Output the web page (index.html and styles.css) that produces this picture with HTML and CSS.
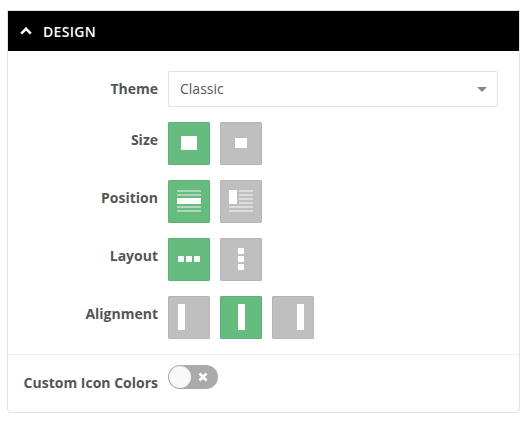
FILE: index.html
```html
<!DOCTYPE html>
<html lang="en">
<head>
  <meta charset="UTF-8">
  <meta name="viewport" content="width=device-width, initial-scale=1.0">
  <title>Design</title>
  <link rel="stylesheet" href="styles.css">
</head>

<body>
  <div class="panel">
    <div class="panel-header">
      <svg class="chevron" width="12" height="8" viewBox="0 0 12 8"><path d="M1.2 6.6 6 1.8l4.8 4.8"/></svg>
      <span>DESIGN</span>
    </div>

    <div class="panel-body">
      <div class="row row-theme">
        <label class="row-label">Theme</label>
        <div class="select">Classic<span class="caret"></span></div>
      </div>

      <div class="row">
        <label class="row-label">Size</label>
        <div class="options">
          <button class="option active">
            <svg viewBox="0 0 42 43"><rect class="solid" x="13" y="14" width="16" height="14"/></svg>
          </button>
          <button class="option">
            <svg viewBox="0 0 42 43"><rect class="solid" x="15" y="16" width="12" height="10"/></svg>
          </button>
        </div>
      </div>

      <div class="row">
        <label class="row-label">Position</label>
        <div class="options">
          <button class="option active">
            <svg viewBox="0 0 42 43">
              <rect class="faint" x="9" y="10" width="24" height="2"/>
              <rect class="faint" x="9" y="14" width="24" height="2"/>
              <rect class="solid" x="9" y="18" width="24" height="6"/>
              <rect class="faint" x="9" y="26" width="24" height="2"/>
              <rect class="faint" x="9" y="30" width="24" height="2"/>
            </svg>
          </button>
          <button class="option">
            <svg viewBox="0 0 42 43">
              <rect class="solid" x="9" y="10" width="8" height="14"/>
              <rect class="faint" x="19" y="10" width="14" height="2"/>
              <rect class="faint" x="19" y="14" width="14" height="2"/>
              <rect class="faint" x="19" y="18" width="14" height="2"/>
              <rect class="faint" x="19" y="22" width="14" height="2"/>
              <rect class="faint" x="9" y="26" width="24" height="2"/>
              <rect class="faint" x="9" y="30" width="24" height="2"/>
            </svg>
          </button>
        </div>
      </div>

      <div class="row">
        <label class="row-label">Layout</label>
        <div class="options">
          <button class="option active">
            <svg viewBox="0 0 42 43">
              <rect class="solid" x="10" y="18" width="6" height="6" rx="1"/>
              <rect class="solid" x="18" y="18" width="6" height="6" rx="1"/>
              <rect class="solid" x="26" y="18" width="6" height="6" rx="1"/>
            </svg>
          </button>
          <button class="option">
            <svg viewBox="0 0 42 43">
              <rect class="solid" x="18" y="10" width="6" height="6" rx="1"/>
              <rect class="solid" x="18" y="18" width="6" height="6" rx="1"/>
              <rect class="solid" x="18" y="26" width="6" height="6" rx="1"/>
            </svg>
          </button>
        </div>
      </div>

      <div class="row">
        <label class="row-label">Alignment</label>
        <div class="options">
          <button class="option">
            <svg viewBox="0 0 42 43"><rect class="solid" x="10" y="8" width="7" height="26"/></svg>
          </button>
          <button class="option active">
            <svg viewBox="0 0 42 43"><rect class="solid" x="18" y="8" width="7" height="26"/></svg>
          </button>
          <button class="option">
            <svg viewBox="0 0 42 43"><rect class="solid" x="25" y="8" width="7" height="26"/></svg>
          </button>
        </div>
      </div>
    </div>

    <div class="panel-footer">
      <label class="row-label">Custom Icon Colors</label>
      <div class="toggle">
        <span class="toggle-thumb"></span>
        <svg class="toggle-x" width="10" height="10" viewBox="0 0 10 10"><path d="M1.5 1.5l7 7M8.5 1.5l-7 7"/></svg>
      </div>
    </div>
  </div>
</body>
</html>
```

FILE: styles.css
```css
body {
  font-family: "Open Sans", sans-serif;
  margin: 0;
  padding: 10px 11px 10px 7px;
  background: #fff;
  color: #555;
}
.panel {
  border: 1px solid #e2e2e2;
  border-radius: 0 0 4px 4px;
  height: 403px;
  box-sizing: border-box;
}
.panel-header {
  display: flex;
  align-items: center;
  gap: 11px;
  height: 40px;
  padding-left: 12px;
  background: #000;
  color: #fff;
  font-size: 14px;
  font-weight: 600;
  letter-spacing: 0.3px;
}
.chevron {
  fill: none;
  stroke: #fff;
  stroke-width: 2.6;
}
.panel-body {
  padding: 20px 0 15px;
  display: flex;
  flex-direction: column;
  gap: 15px;
}
.row {
  display: flex;
  gap: 10px;
}
.row-label {
  width: 150px;
  text-align: right;
  font-size: 14px;
  font-weight: 700;
  line-height: 20px;
  padding-top: 8px;
}
.row-theme .row-label {
  padding-top: 8px;
}
.select {
  position: relative;
  box-sizing: border-box;
  width: 330px;
  height: 36px;
  padding: 0 11px;
  border: 1px solid #e2e2e2;
  border-radius: 2px;
  font-size: 14px;
  line-height: 34px;
}
.caret {
  position: absolute;
  right: 10px;
  top: 15px;
  border-left: 5px solid transparent;
  border-right: 5px solid transparent;
  border-top: 5px solid #888;
}
.options {
  display: flex;
  gap: 10px;
}
.option {
  display: block;
  box-sizing: border-box;
  width: 42px;
  height: 43px;
  padding: 0;
  border: 0;
  border-radius: 2px;
  background: #bfbfbf;
  box-shadow: inset 0 0 0 1px #b5b5b5;
}
.option.active {
  background: #66bb7e;
  box-shadow: inset 0 0 0 1px #5cb274;
}
.option svg {
  display: block;
  width: 42px;
  height: 43px;
}
.solid {
  fill: #fff;
}
.faint {
  fill: #fff;
  fill-opacity: 0.45;
}
.panel-footer {
  display: flex;
  gap: 10px;
  padding-top: 10px;
  border-top: 1px solid #eee;
}
.panel-footer .row-label {
  padding-top: 8px;
}
.toggle {
  position: relative;
  width: 50px;
  height: 24px;
  border-radius: 12px;
  background: #aaa;
}
.toggle-thumb {
  position: absolute;
  left: 1px;
  top: 1px;
  width: 22px;
  height: 22px;
  border-radius: 50%;
  background: #f8f8f8;
}
.toggle-x {
  position: absolute;
  left: 30px;
  top: 7px;
  fill: none;
  stroke: #fff;
  stroke-width: 2.6;
}
```
